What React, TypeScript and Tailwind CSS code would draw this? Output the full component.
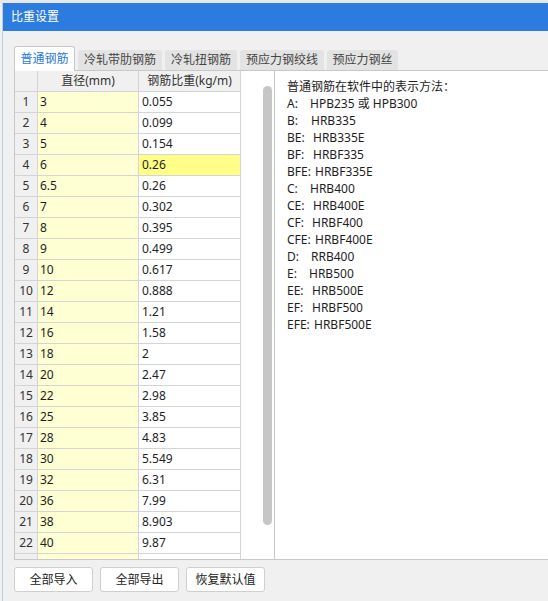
import React from "react";

const rows: [string, string][] = [
  ["3", "0.055"],
  ["4", "0.099"],
  ["5", "0.154"],
  ["6", "0.26"],
  ["6.5", "0.26"],
  ["7", "0.302"],
  ["8", "0.395"],
  ["9", "0.499"],
  ["10", "0.617"],
  ["12", "0.888"],
  ["14", "1.21"],
  ["16", "1.58"],
  ["18", "2"],
  ["20", "2.47"],
  ["22", "2.98"],
  ["25", "3.85"],
  ["28", "4.83"],
  ["30", "5.549"],
  ["32", "6.31"],
  ["36", "7.99"],
  ["38", "8.903"],
  ["40", "9.87"],
];

const legend: { label: string; value: string; w: string }[] = [
  { label: "A:", value: "HPB235 或 HPB300", w: "w-[23px]" },
  { label: "B:", value: "HRB335", w: "w-[24px]" },
  { label: "BE:", value: "HRB335E", w: "w-[26px]" },
  { label: "BF:", value: "HRBF335", w: "w-[26px]" },
  { label: "BFE:", value: "HRBF335E", w: "w-[28px]" },
  { label: "C:", value: "HRB400", w: "w-[23px]" },
  { label: "CE:", value: "HRB400E", w: "w-[26px]" },
  { label: "CF:", value: "HRBF400", w: "w-[25px]" },
  { label: "CFE:", value: "HRBF400E", w: "w-[28px]" },
  { label: "D:", value: "RRB400", w: "w-[24px]" },
  { label: "E:", value: "HRB500", w: "w-[22px]" },
  { label: "EE:", value: "HRB500E", w: "w-[25px]" },
  { label: "EF:", value: "HRBF500", w: "w-[25px]" },
  { label: "EFE:", value: "HRBF500E", w: "w-[27px]" },
];

const tabs = [
  { label: "冷轧带肋钢筋", w: "w-[84px]" },
  { label: "冷轧扭钢筋", w: "w-[72px]" },
  { label: "预应力钢绞线", w: "w-[84px]" },
  { label: "预应力钢丝", w: "w-[71px]" },
];

export default function App() {
  return (
    <div
      className="w-[548px] h-[601px] overflow-hidden bg-[#f0f0f0] flex flex-col text-[12px] text-[#1e1e1e]"
      style={{ fontFamily: '"Noto Sans", "Noto Sans CJK SC", sans-serif' }}
    >
      <div className="h-[3px] bg-[#e6e9ec] shrink-0" />
      <div className="flex flex-1 min-h-0">
        <div className="w-[3px] shrink-0 bg-[#eef1f4] border-r border-[#c4ccd4]" />
        <div className="flex-1 flex flex-col min-w-0">
          <div className="h-[28px] bg-[#2c7ce0] flex items-center pl-[8px] text-white text-[12px] shrink-0">
            比重设置
          </div>
          <div className="flex flex-col pt-[15px] pl-[11px]">
            <div className="flex items-end h-[24px] gap-[3px]">
              <div className="w-[61px] h-[25px] -mb-[1px] bg-white border border-b-0 border-[#c8c8c8] rounded-t-[3px] flex items-center justify-center text-[#2a78dc] relative z-10">
                普通钢筋
              </div>
              {tabs.map((t) => (
                <div
                  key={t.label}
                  className={`${t.w} h-[20px] bg-[#e3e3e3] rounded-t-[3px] flex items-center justify-center text-[#444]`}
                >
                  {t.label}
                </div>
              ))}
            </div>
            <div className="h-[490px] flex border-t border-b border-[#c8c8c8]">
              <div className="w-[260px] flex bg-white border-l border-[#c8c8c8] overflow-hidden">
                <div className="flex flex-col w-[226px] shrink-0">
                  <div className="flex h-[21px] shrink-0 bg-[#f0f0f0] text-[#333]">
                    <div className="w-[23px] border-r border-b border-[#d4d4d4]" />
                    <div className="w-[101px] border-r border-b border-[#d4d4d4] flex items-center justify-center">
                      直径(mm)
                    </div>
                    <div className="w-[102px] border-r border-b border-[#d4d4d4] flex items-center justify-center">
                      钢筋比重(kg/m)
                    </div>
                  </div>
                  {rows.map(([d, w], i) => (
                    <div key={i} className="flex h-[21px] shrink-0">
                      <div className="w-[23px] bg-[#f0f0f0] border-r border-b border-[#d4d4d4] flex items-center justify-center text-[#333]">
                        {i + 1}
                      </div>
                      <div className="w-[101px] bg-[#ffffd4] border-r border-b border-[#d4d4d4] flex items-center pl-[2px]">
                        {d}
                      </div>
                      <div
                        className={`w-[102px] border-r border-b border-[#d4d4d4] flex items-center pl-[3px] ${
                          i === 3 ? "bg-[#ffff88]" : "bg-white"
                        }`}
                      >
                        {w}
                      </div>
                    </div>
                  ))}
                  <div className="flex h-[21px] shrink-0">
                    <div className="w-[23px] bg-[#f0f0f0] border-r border-b border-[#d4d4d4]" />
                    <div className="w-[101px] bg-[#ffffd4] border-r border-b border-[#d4d4d4]" />
                    <div className="w-[102px] bg-white border-r border-b border-[#d4d4d4]" />
                  </div>
                </div>
                <div className="flex-1 pt-[15px] pl-[22px]">
                  <div className="w-[9px] h-[439px] rounded-full bg-[#c6c6c6]" />
                </div>
              </div>
              <div className="flex-1 bg-white border-l border-[#c8c8c8] pl-[12px] pt-[7px] leading-[17px]">
                <div>普通钢筋在软件中的表示方法：</div>
                {legend.map((l) => (
                  <div key={l.label} className="flex whitespace-nowrap">
                    <span className={`${l.w} shrink-0`}>{l.label}</span>
                    <span>{l.value}</span>
                  </div>
                ))}
              </div>
            </div>
            <div className="flex gap-[7px] pt-[7px]">
              <button className="w-[79px] h-[25px] bg-white border border-[#cfcfcf] rounded-[3px] text-[#222]">
                全部导入
              </button>
              <button className="w-[79px] h-[25px] bg-white border border-[#cfcfcf] rounded-[3px] text-[#222]">
                全部导出
              </button>
              <button className="w-[79px] h-[25px] bg-white border border-[#cfcfcf] rounded-[3px] text-[#222]">
                恢复默认值
              </button>
            </div>
          </div>
        </div>
      </div>
    </div>
  );
}
